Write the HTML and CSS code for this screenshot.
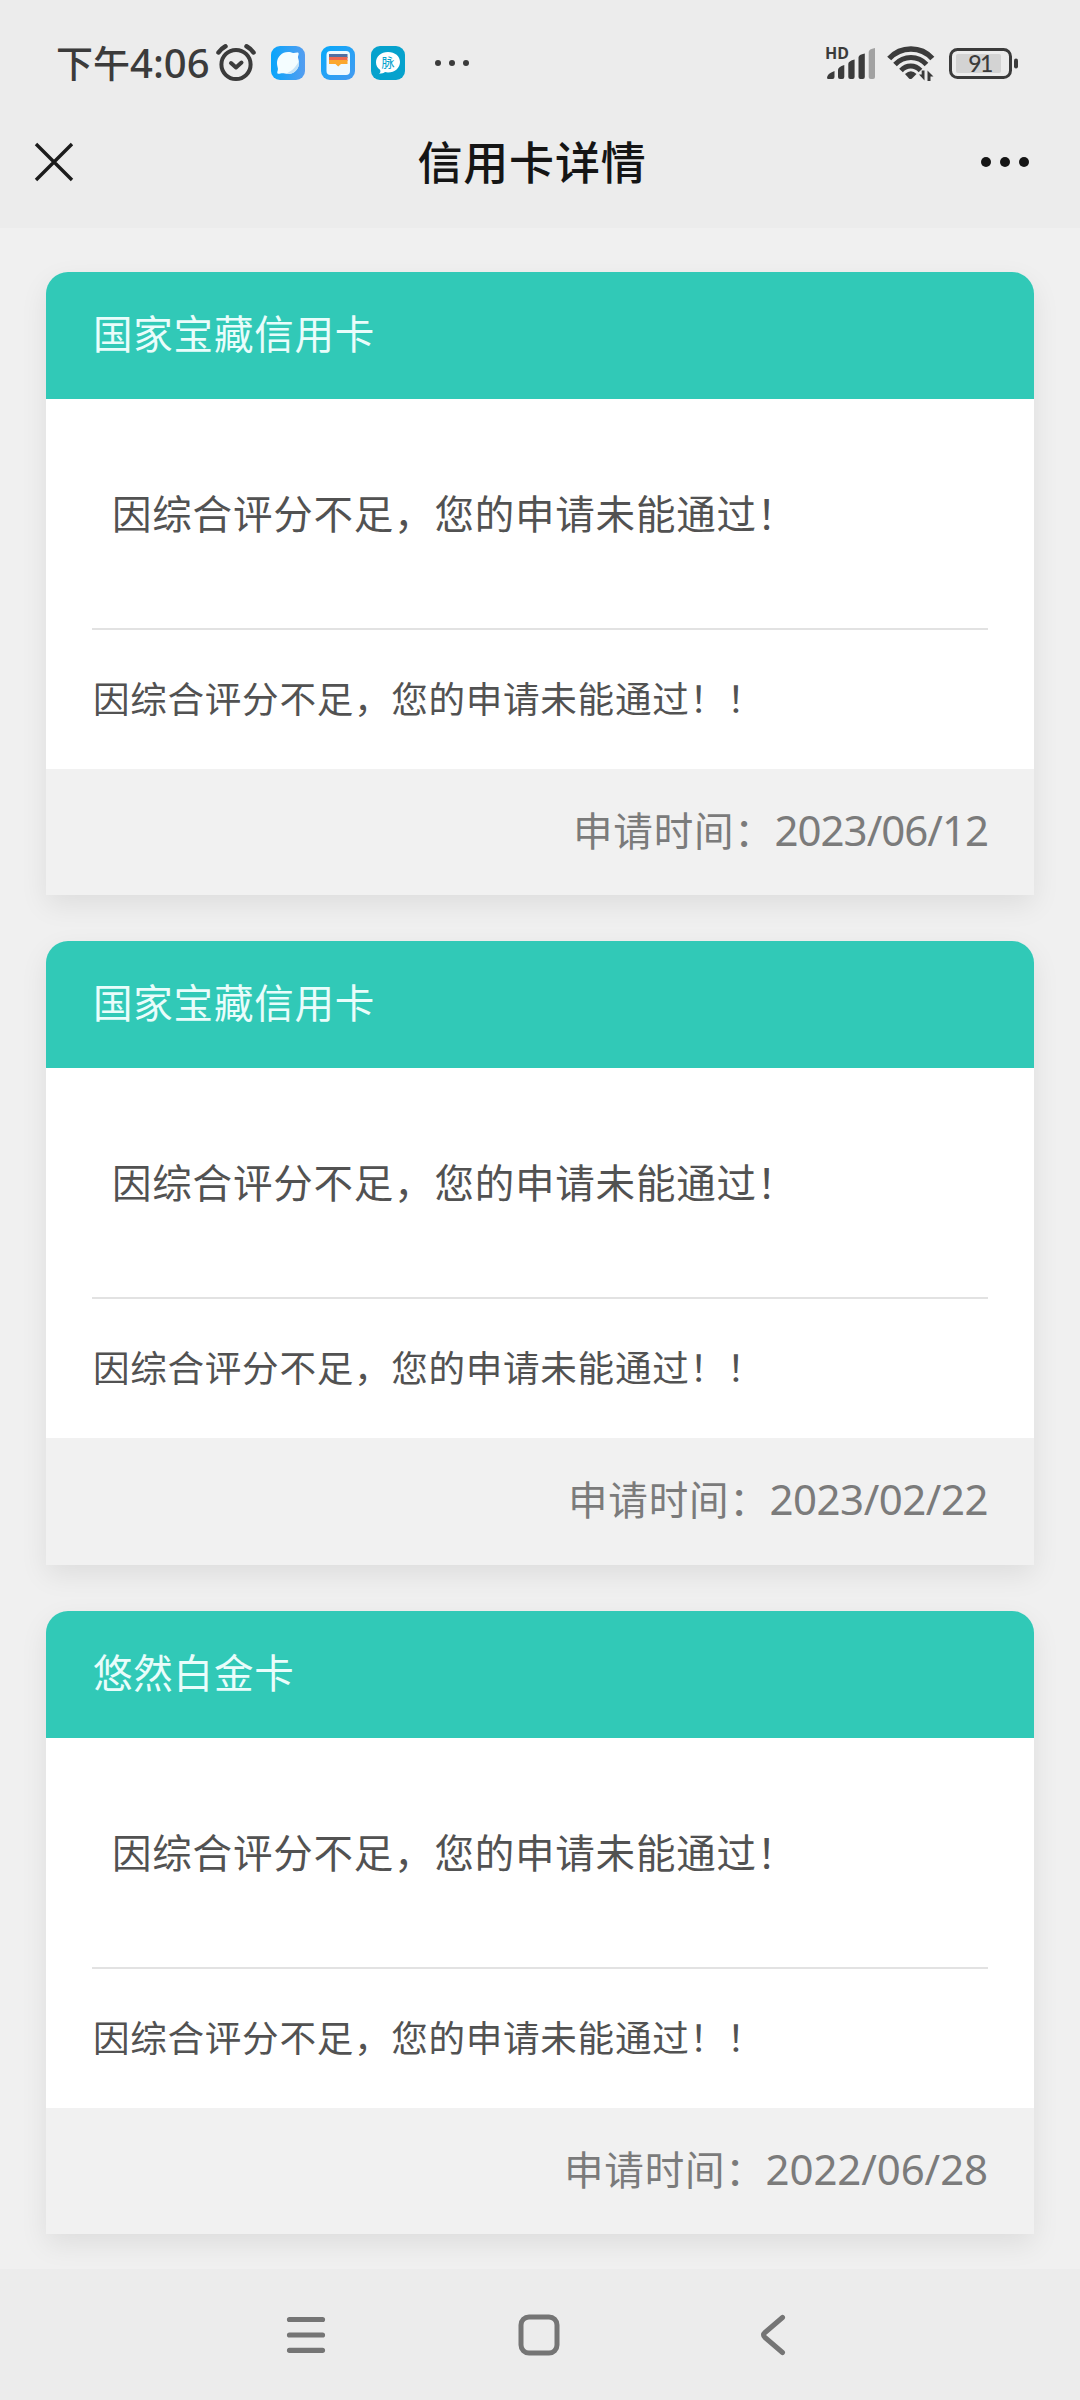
FILE: index.html
```html
<!DOCTYPE html>
<html lang="zh-CN">
<head>
<meta charset="utf-8">
<title>信用卡详情</title>
<link rel="stylesheet" href="styles.css">
</head>
<body>
<div class="status">
  <span class="time">下午<span class="clock">4:06</span></span>
  <svg class="alarm" width="40" height="38" viewBox="0 0 40 38" fill="none" stroke="#3b3b3b" stroke-linecap="round">
    <circle cx="20" cy="20.5" r="14.6" stroke-width="4"/>
    <path d="M2.500 8.500C4.500 5.500 6.500 4 9.500 2.300M37.500 8.500C35.500 5.500 33.500 4 30.500 2.300" stroke-width="4.500"/>
    <path d="M15 19l5 4.500 5.500-5" stroke-width="4" stroke-linejoin="round"/>
  </svg>
  <span class="apps">
    <svg width="34" height="34" viewBox="0 0 34 34">
      <defs><linearGradient id="blue" x1="0" x2="1" y2="0"><stop stop-color="#08a5fb"/><stop offset="1" stop-color="#559df0"/></linearGradient></defs>
      <rect width="34" height="34" rx="9" fill="url(#blue)"/>
      <path d="M17 6c2.500 0 3.600.6 5.200.9 1.800.2 4.600-.9 5.300.1.800 1.100-.9 3-.5 4.800.5 1.700 1 3 1 5.200a11 11 0 0 1-11 11c-2.500 0-4-.7-5.500-.7-1.800 0-4.200 1-5 .2-.9-1 .7-3.200.4-5C6.500 20.500 6 19.300 6 17A11 11 0 0 1 17 6z" fill="#f4fdff"/>
      <path d="M27.900 15C25 21 21.500 24.500 15 27.800A11 11 0 0 0 27.900 15z" fill="#c5e3f6"/>
    </svg>
    <svg width="34" height="34" viewBox="0 0 34 34">
      <defs><linearGradient id="sky" x1="0" x2="1" y2="1"><stop stop-color="#06a9fa"/><stop offset="1" stop-color="#469af0"/></linearGradient></defs>
      <rect width="34" height="34" rx="9" fill="url(#sky)"/>
      <rect x="5.500" y="5" width="23.500" height="24" rx="4" fill="#eff9ff"/>
      <path d="M8 8h18.500v4H8z" fill="#526fa2"/><path d="M8 11h18.500v4H8z" fill="#ef6850"/>
      <path d="M8 14h18.500v4H20l-2.800 2.500L14.500 18H8z" fill="#fba72f"/>
    </svg>
    <svg width="34" height="34" viewBox="0 0 34 34">
      <rect width="34" height="34" rx="9" fill="#06a2cd"/>
      <path d="M17 6c7 0 12 4.300 12 10s-5 10.500-12 10.500c-1.200 0-2-.2-3-.4-1 1-3.500 1.700-6 1.700 1.500-1 1.700-2.600 1-4C6.300 21.900 5 19.300 5 16.300 5 10.500 10 6 17 6z" fill="#fff"/>
      <text x="17" y="21" text-anchor="middle" class="app-glyph">脉</text>
    </svg>
  </span>
  <svg class="more-apps" width="36" height="8" fill="#3b3b3b"><circle cx="4" cy="4" r="3"/><circle cx="18" cy="4" r="3"/><circle cx="32" cy="4" r="3"/></svg>
  <svg class="signal" width="52" height="36" viewBox="0 0 52 36" fill="#3b3b3b">
    <text x="0" y="13.500" class="hd" textLength="24" lengthAdjust="spacingAndGlyphs">HD</text>
    <path d="M2 33q0-4.500 7.500-7v6q0 2-2 2h-4Q2 34 2 33zM13 25q0-3 6.300-5v12q0 2-2 2H15q-2 0-2-2zM23.300 19q0-3 6.300-4.500V32q0 2-2 2h-2.300q-2 0-2-2zM33.500 12.500q0-3 6.300-4V32q0 2-2 2h-2.300q-2 0-2-2z"/>
    <path d="M43.700 7q0-3 6.300-4v29q0 2-2 2h-2.300q-2 0-2-2z" fill="#a2a2a2"/>
  </svg>
  <svg class="wifi" width="48" height="36" viewBox="0 0 48 36" fill="none" stroke="#3b3b3b">
    <path d="M2.200 13.500C14 .8 34 .8 45.300 13.500" stroke-width="5.500"/>
    <path d="M8 19.500c9-9.200 23-9.200 31.500 0" stroke-width="5"/>
    <path d="M14 25.500c5.500-6 14-6 19.500 0" stroke-width="5"/>
    <path d="M18 29q6-5.500 11.500 0L25 33.500q-1.500 1-3 0z" fill="#3b3b3b" stroke="none"/>
    <path d="M37.500 25.500v10l-5.500-6h2.700v-4zM40.500 36V25.500l6 6H43.500V36z" fill="#3b3b3b" stroke="none"/>
  </svg>
  <svg class="battery" width="70" height="31" viewBox="0 0 70 31">
    <rect x="1.500" y="1.500" width="60" height="28" rx="7" fill="none" stroke="#3b3b3b" stroke-width="3"/>
    <rect x="7" y="6" width="45" height="19" rx="2" fill="#d3d3d3"/>
    <rect x="65" y="10.500" width="4" height="10" rx="2" fill="#3b3b3b"/>
    <text x="31" y="24" text-anchor="middle" class="level">91</text>
  </svg>
</div>
<header class="navbar">
  <svg width="40" height="40" viewBox="0 0 40 40" stroke="#1c1c1c" stroke-width="3.400"><path d="M2 2l36 36M38 2L2 38"/></svg>
  <h1>信用卡详情</h1>
  <svg width="50" height="12" fill="#151515"><circle cx="6" cy="6" r="5"/><circle cx="25" cy="6" r="5"/><circle cx="44" cy="6" r="5"/></svg>
</header>
<main class="list">
  <section class="card">
    <h2>国家宝藏信用卡</h2>
    <div class="body"><p class="result">因综合评分不足，您的申请未能通过！</p><p class="reason">因综合评分不足，您的申请未能通过！！</p></div>
    <footer>申请时间：<span class="date tight">2023/06/12</span></footer>
  </section>
  <section class="card">
    <h2>国家宝藏信用卡</h2>
    <div class="body"><p class="result">因综合评分不足，您的申请未能通过！</p><p class="reason">因综合评分不足，您的申请未能通过！！</p></div>
    <footer>申请时间：<span class="date snug">2023/02/22</span></footer>
  </section>
  <section class="card">
    <h2>悠然白金卡</h2>
    <div class="body"><p class="result">因综合评分不足，您的申请未能通过！</p><p class="reason">因综合评分不足，您的申请未能通过！！</p></div>
    <footer>申请时间：<span class="date">2022/06/28</span></footer>
  </section>
</main>
<nav class="system">
  <svg width="40" height="42" viewBox="0 0 40 42" stroke="#757575" stroke-width="5.200" stroke-linecap="round"><path d="M3.500 5.500h33M3.500 21h33M3.500 36.300h33"/></svg>
  <svg width="42" height="42" viewBox="0 0 42 42" fill="none" stroke="#757575" stroke-width="5"><rect x="3" y="3" width="36" height="36" rx="8"/></svg>
  <svg width="26" height="42" viewBox="0 0 26 42" fill="none" stroke="#757575" stroke-width="5" stroke-linecap="round"><path d="M22.500 3.500L5 18.500q-3 2.500 0 5L22.500 38.500"/></svg>
</nav>
</body>
</html>
```
FILE: styles.css
```css
* { box-sizing: border-box; }
body {
  margin: 0;
  width: 1080px;
  height: 2400px;
  overflow: hidden;
  display: flex;
  flex-direction: column;
  background: #f0f0f0;
  font-family: "Noto Sans CJK SC", sans-serif;
}
svg { display: block; flex: none; overflow: visible; }
h1, h2, p { margin: 0; font-weight: 400; }

.status {
  display: flex;
  align-items: center;
  height: 126px;
  padding: 0 61px 0 56px;
  background: #ececec;
  color: #3b3b3b;
}
.time { width: 160px; padding-bottom: 2px; font-size: 37px; white-space: nowrap; font-weight: 500; line-height: 60px; }
.clock { font-family: "Noto Sans", sans-serif; font-size: 40px; font-weight: 500; }
.apps { display: flex; gap: 16px; margin-left: 15px; }
.app-glyph { font-size: 13px; fill: #06a2cd; }
.more-apps { margin-left: 29px; }
.signal { margin-left: auto; }
.hd { font: 700 16px "Noto Sans", sans-serif; }
.wifi { margin-left: 10px; }
.battery { margin-left: 14px; }
.level { font: 500 23px Lato, sans-serif; letter-spacing: -1.5px; fill: #3b3b3b; }

.navbar {
  display: flex;
  align-items: center;
  height: 102px;
  padding: 0 50px 31px 34px;
  background: #ececec;
}
.navbar h1 {
  flex: 1;
  padding: 0 0 3px 10px;
  font-size: 45px;
  font-weight: 500;
  line-height: 67px;
  letter-spacing: .8px;
  text-align: center;
  color: #151515;
}

.list {
  flex: 1;
  display: flex;
  flex-direction: column;
  gap: 46px;
  padding: 44px 46px 0;
  overflow: hidden;
}
.card {
  flex: none;
  height: 623.4px;
  display: flex;
  flex-direction: column;
  border-radius: 22px 22px 0 0;
  box-shadow: 0 10px 28px rgba(0, 0, 0, .08);
  font-size: 39.5px;
  letter-spacing: .8px;
}
.card h2 {
  flex: none;
  height: 127px;
  padding: 0 47px;
  border-radius: 22px 22px 0 0;
  background: #31c9b7;
  color: #e9fdfb;
  font-size: 39.5px;
  line-height: 120px;
}
.body { flex: none; height: 370px; padding: 0 46px; background: #fff; color: #525252; }
.result { height: 231px; padding-left: 20px; border-bottom: 2px solid #e2e2e2; line-height: 226px; }
.reason { padding-left: 1px; font-size: 36.6px; letter-spacing: .7px; line-height: 135px; }
.card footer {
  flex: 1;
  padding: 0 46px;
  background: #f1f1f1;
  color: #7b7b7b;
  text-align: right;
  line-height: 120px;
}
.date { font-family: "Noto Sans", sans-serif; font-size: 42px; letter-spacing: -.1px; }
.snug { letter-spacing: -.5px; }
.tight { letter-spacing: -1px; }

.system {
  display: flex;
  align-items: center;
  justify-content: space-between;
  height: 131px;
  padding: 0 294px 0 286px;
  background: #ececec;
}
.system svg:nth-child(2) { margin-right: 9px; }
```
